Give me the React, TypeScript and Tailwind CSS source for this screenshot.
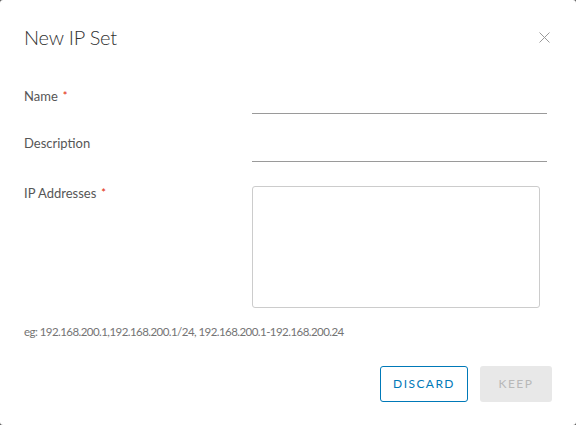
import React from 'react';

const Required = () => <span className="ml-[5px] text-[11px] text-[#e12200] align-top">*</span>;

export default function App() {
  return (
    <div className="w-[576px] h-[425px] bg-[#5a5a5a]" style={{ fontFamily: 'Lato, "Open Sans", sans-serif' }}>
      <div className="relative w-full h-full bg-white rounded-[3px] px-6">
        {/* Header */}
        <div className="flex items-start justify-between pt-[21px]">
          <h1 className="text-[20px] leading-[33px] font-light text-[#313131] tracking-[-0.2px]">New IP Set</h1>
          <button className="mt-[10px] mr-[2px] w-[12px] h-[12px] flex items-center justify-center" aria-label="Close">
            <svg width="11" height="11" viewBox="0 0 11 11">
              <path d="M0.5 0.5 L10.5 10.5 M10.5 0.5 L0.5 10.5" stroke="#9a9a9a" strokeWidth="1" />
            </svg>
          </button>
        </div>

        {/* Form */}
        <div className="mt-[34px] flex flex-col text-[13px] text-[#565656]">
          <div className="flex items-start">
            <label className="w-[228px] leading-4">Name<Required /></label>
            <div className="w-[295px] h-[26px] border-b border-[#9a9a9a]" />
          </div>
          <div className="flex items-start mt-[21px]">
            <label className="w-[228px] leading-4">Description</label>
            <div className="w-[295px] h-[27px] border-b border-[#9a9a9a]" />
          </div>
          <div className="flex items-start mt-[23px]">
            <label className="w-[228px] leading-4">IP Addresses<Required /></label>
            <textarea className="mt-px w-[288px] h-[122px] border border-[#cccccc] rounded-[3px] resize-none outline-none" />
          </div>
        </div>

        <p className="mt-[16px] text-[11.5px] leading-4 text-[#747474] tracking-[-0.55px]">
          eg: 192.168.200.1,192.168.200.1/24, 192.168.200.1-192.168.200.24
        </p>

        {/* Footer */}
        <div className="mt-[26px] flex justify-end gap-3">
          <button className="w-[88px] h-[36px] border border-[#0079b8] rounded-[3px] text-[12px] font-normal tracking-[0.12em] text-[#0079b8]">
            DISCARD
          </button>
          <button className="w-[72px] h-[36px] bg-[#e8e8e8] rounded-[3px] text-[12px] font-normal tracking-[0.12em] text-[#b8b8b8]">
            KEEP
          </button>
        </div>
      </div>
    </div>
  );
}
